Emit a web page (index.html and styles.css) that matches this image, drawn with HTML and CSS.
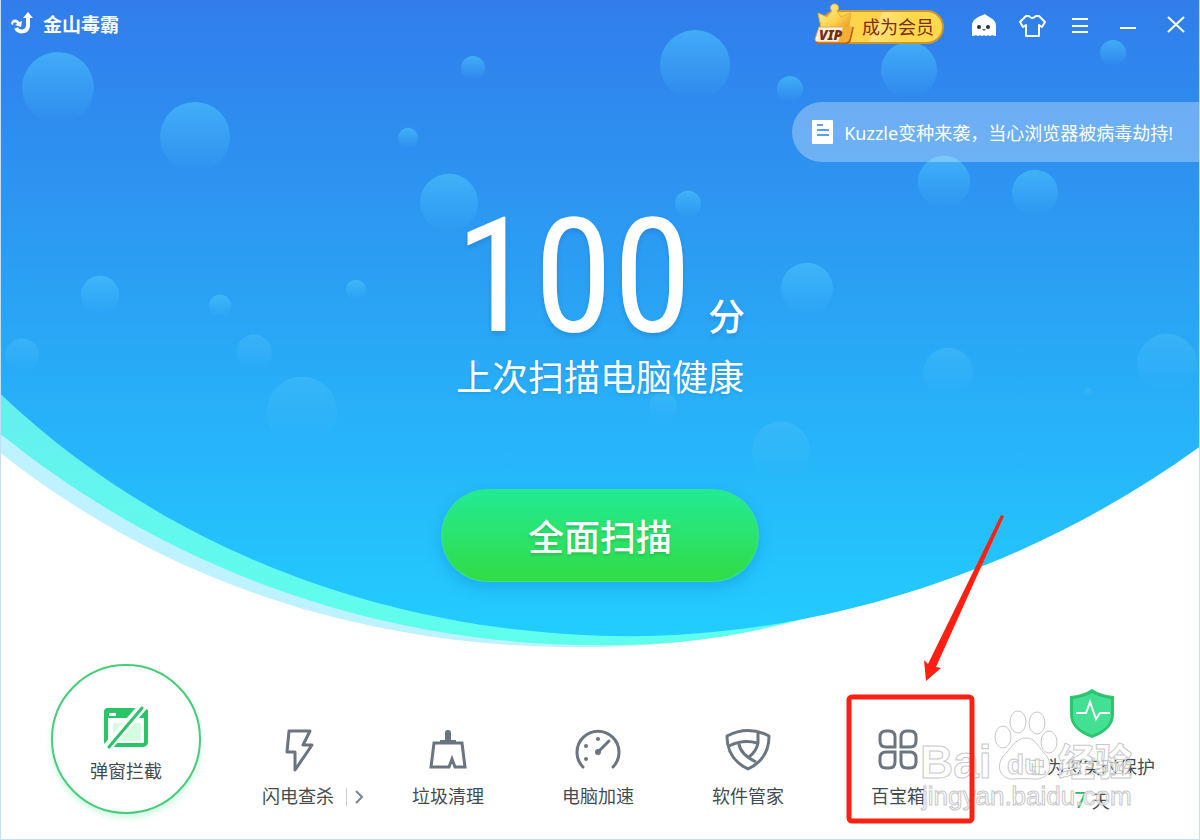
FILE: index.html
```html
<!DOCTYPE html>
<html lang="zh-CN">
<head>
    <meta charset="utf-8">
    <title>金山毒霸</title>
    <link rel="stylesheet" href="styles.css">
</head>
<body>
<div class="app">
    <svg class="backdrop" viewBox="0 0 1200 840" preserveAspectRatio="none" aria-hidden="true">
        <defs>
            <linearGradient id="sky" gradientUnits="userSpaceOnUse" x1="0" y1="0" x2="0" y2="640">
                <stop offset="0" stop-color="#317deb"/>
                <stop offset="1" stop-color="#22cdff"/>
            </linearGradient>
            <linearGradient id="wave" x1="0" y1="0" x2="0" y2="1">
                <stop offset="0" stop-color="#67e9ee"/>
                <stop offset="1" stop-color="#5fffed"/>
            </linearGradient>
            <linearGradient id="bubble" x1="0" y1="0" x2="0" y2="1">
                <stop offset="0" stop-color="#48bffb" stop-opacity=".7"/>
                <stop offset="1" stop-color="#48bffb" stop-opacity="0"/>
            </linearGradient>
        </defs>
        <path fill="#bdf2fe" d="M0 453C170 588 372 648 580 648C650 648 740 640 800 618L800 300L0 300z"/>
        <path fill="url(#wave)" d="M0 434C170 572 380 646 600 646C680 646 745 637 820 615L820 300L0 390z"/>
        <path fill="url(#sky)" d="M0 0H1200V447C1020 578 810 637 630 637C400 637 170 556 0 394z"/>
        <g fill="url(#bubble)">
            <circle cx="58" cy="88" r="36"/>
            <circle cx="195" cy="137" r="35"/>
            <circle cx="473" cy="68" r="12"/>
            <circle cx="408" cy="138" r="10"/>
            <circle cx="449" cy="203" r="29"/>
            <circle cx="695" cy="65" r="35"/>
            <circle cx="790" cy="89" r="13"/>
            <circle cx="909" cy="70" r="28"/>
            <circle cx="1113" cy="53" r="13"/>
            <circle cx="944" cy="182" r="26"/>
            <circle cx="1035" cy="193" r="23"/>
            <circle cx="688" cy="204" r="13"/>
            <circle cx="807" cy="289" r="26"/>
            <circle cx="100" cy="295" r="19"/>
            <circle cx="220" cy="306" r="11"/>
            <circle cx="356" cy="290" r="10"/>
        </g>
        <g fill="url(#bubble)" opacity=".7">
            <circle cx="22" cy="356" r="17"/>
            <circle cx="254" cy="353" r="18"/>
            <circle cx="302" cy="412" r="35"/>
            <circle cx="474" cy="366" r="6"/>
            <circle cx="663" cy="407" r="14"/>
            <circle cx="948" cy="373" r="25"/>
            <circle cx="1167" cy="364" r="30"/>
            <circle cx="1088" cy="393" r="4"/>
            <circle cx="781" cy="451" r="29"/>
        </g>
    </svg>

    <header class="titlebar">
        <div class="brand">
            <svg width="24" height="24" viewBox="0 0 24 24" aria-hidden="true">
                <path d="M1 12c0-5 6-6 8-2l3-1-1 6-6-2 2-1c-1-2-4-2-4 1z" fill="#fff"/>
                <path d="M6 16c2 5 12 5 12-3V6" fill="none" stroke="#fff" stroke-width="4"/>
                <path d="M18 0l5 6H13z" fill="#fff"/>
            </svg>
            <span>金山毒霸</span>
        </div>
        <div class="tools">
            <button class="vip">
                <svg class="crown" width="42" height="44" viewBox="0 0 42 44" aria-hidden="true">
                    <defs>
                        <linearGradient id="gold" x1="0" y1="0" x2="1" y2="1">
                            <stop offset="0" stop-color="#fff2a6"/>
                            <stop offset=".55" stop-color="#ffd34d"/>
                            <stop offset="1" stop-color="#e38b18"/>
                        </linearGradient>
                    </defs>
                    <path d="M4 11l9 4 5-6a4 4 0 1 1 5 0l4 6 10-4-3 19H8z" fill="url(#gold)" stroke="#e8b040"/>
                    <path d="M6 25h34l-3 13q-1 4-4 4H5q-4 0-4-4z" fill="#b66714"/>
                    <path d="M5 25h33l-3 12q-1 3-4 3H4q-3 0-3-3z" fill="#fff3df" stroke="#e2a558"/>
                    <path d="M29 25h9l-3 12q-1 3-4 3h-7z" fill="#f5ad32"/>
                    <text x="5" y="38" class="vip-mark">VIP</text>
                </svg>
                <span>成为会员</span>
            </button>
            <button class="tool" aria-label="助手">
                <svg width="28" height="28" viewBox="0 0 28 28" aria-hidden="true">
                    <path d="M2 25V15C2 8 8 6 13 4l2-1c2 3 11 4 11 12v10q-3 0-4-1-2 2-4 0-2 2-4 0-2 2-4 0-2 2-4 0-1 1-4 1z" fill="#fff"/>
                    <circle cx="9" cy="16" r="2" fill="#233"/>
                    <circle cx="18" cy="16" r="2" fill="#233"/>
                    <path d="M12 18h4l-2 2z" fill="#566"/>
                </svg>
            </button>
            <button class="tool" aria-label="换肤">
                <svg width="28" height="28" viewBox="0 0 28 28" aria-hidden="true">
                    <path d="M8 5l-6 6 3 5 3-2v11h13V14l3 2 3-5-6-6h-3q-4 4-7 0z" fill="none" stroke="#fff" stroke-width="2" stroke-linejoin="round"/>
                </svg>
            </button>
            <button class="tool" aria-label="菜单">
                <svg width="28" height="28" viewBox="0 0 28 28" aria-hidden="true">
                    <path d="M6 8h16M6 15h16M6 21h16" stroke="#fff" stroke-width="2"/>
                </svg>
            </button>
            <button class="tool" aria-label="最小化">
                <svg width="28" height="28" viewBox="0 0 28 28" aria-hidden="true">
                    <path d="M6 17h16" stroke="#fff" stroke-width="2"/>
                </svg>
            </button>
            <button class="tool" aria-label="关闭">
                <svg width="28" height="28" viewBox="0 0 28 28" aria-hidden="true">
                    <path d="M6 6l16 15M22 6L6 21" stroke="#fff" stroke-width="2"/>
                </svg>
            </button>
        </div>
    </header>

    <a class="notice" href="#">
        <svg width="24" height="28" viewBox="0 0 24 28" aria-hidden="true">
            <rect x="1" y="2" width="21" height="24" rx="1" fill="#fff"/>
            <path d="M6 7h6M6 12h12M6 17h12" stroke="#5b9fec" stroke-width="2"/>
        </svg>
        <span>Kuzzle变种来袭，当心浏览器被病毒劫持!</span>
    </a>

    <main class="hero">
        <div class="score"><span class="number">100</span><span class="unit">分</span></div>
        <p class="status">上次扫描电脑健康</p>
        <button class="scan">全面扫描</button>
    </main>

    <footer class="dock">
        <button class="popup">
            <svg width="48" height="48" viewBox="0 0 48 48" aria-hidden="true">
                <rect x="4" y="6" width="40" height="35" rx="3" fill="#fff" stroke="#29c466" stroke-width="4"/>
                <path d="M2 14V8q0-4 4-4h36q4 0 4 4v6z" fill="#29c466"/>
                <path d="M11 19h28v18H11z" fill="#d5fde1"/>
                <path d="M7 9h7v3H7z" fill="#fff"/>
                <path d="M3 46L43 0" stroke="#fff" stroke-width="9"/>
                <path d="M7 43L40 4" stroke="#29c466" stroke-width="3" stroke-linecap="round"/>
            </svg>
            <span>弹窗拦截</span>
        </button>
        <nav class="features">
            <div class="feature-group">
                <button class="feature">
                    <svg width="48" height="48" viewBox="0 0 48 48" aria-hidden="true">
                        <path d="M15 5h21l-7 14h9L21 44V26h-8z" fill="none" stroke="#6b7580" stroke-width="3" stroke-linejoin="round"/>
                    </svg>
                    <span>闪电查杀</span>
                </button>
                <button class="more" aria-label="更多查杀方式">
                    <svg width="10" height="18" viewBox="0 0 10 18" aria-hidden="true">
                        <path d="M1 3l6 6-6 6" fill="none" stroke="#7b858e" stroke-width="2"/>
                    </svg>
                </button>
            </div>
            <button class="feature">
                <svg width="48" height="48" viewBox="0 0 48 48" aria-hidden="true">
                    <path d="M21 14V7q0-3 3-3t3 3v7h5v4H16v-4z" fill="#6b7580"/>
                    <path d="M10 17h28l3 24H31l-3-8-3 8H7z" fill="none" stroke="#6b7580" stroke-width="3"/>
                </svg>
                <span>垃圾清理</span>
            </button>
            <button class="feature">
                <svg width="48" height="48" viewBox="0 0 48 48" aria-hidden="true">
                    <path d="M9 41a21 21 0 1 1 30 0" fill="none" stroke="#6b7580" stroke-width="3" stroke-linecap="round"/>
                    <path d="M24 26l11-11" stroke="#6b7580" stroke-width="3" stroke-linecap="round"/>
                    <circle cx="24" cy="26" r="3" fill="#6b7580"/>
                    <g fill="#6b7580"><circle cx="12" cy="33" r="2"/><circle cx="12" cy="20" r="2"/><circle cx="24" cy="13" r="2"/></g>
                </svg>
                <span>电脑加速</span>
            </button>
            <button class="feature">
                <svg width="48" height="48" viewBox="0 0 48 48" aria-hidden="true">
                    <g fill="none" stroke="#6b7580" stroke-width="3" stroke-linejoin="round">
                        <path d="M3 10q21-11 42 0 0 23-21 33Q3 33 3 10z"/>
                        <path d="M5 20q14-7 28-3M34 6v11c-1 6-4 10-9 14M15 18c1 8 7 13 17 18"/>
                    </g>
                </svg>
                <span>软件管家</span>
            </button>
            <button class="feature">
                <svg width="48" height="48" viewBox="0 0 48 48" aria-hidden="true">
                    <g fill="none" stroke="#6b7580" stroke-width="3">
                        <path d="M21 21h-9q-6 0-6-6v-4q0-6 6-6h3q6 0 6 6z"/>
                        <path d="M27 21h9q6 0 6-6v-4q0-6-6-6h-3q-6 0-6 6z"/>
                        <path d="M21 26h-9q-6 0-6 6v4q0 6 6 6h3q6 0 6-6z"/>
                        <path d="M27 26h9q6 0 6 6v4q0 6-6 6h-3q-6 0-6-6z"/>
                    </g>
                </svg>
                <span>百宝箱</span>
            </button>
        </nav>
        <div class="guard">
            <svg width="48" height="54" viewBox="0 0 48 54" aria-hidden="true">
                <path d="M24 2q9 6 22 7v18q0 16-22 24Q2 43 2 27V9q13-1 22-7z" fill="#2cc46e"/>
                <path d="M24 6q9 5 19 6v16q0 13-19 20Q5 41 5 28V12q10-1 19-6z" fill="#43df92"/>
                <path d="M8 26h10l4-11 6 17 4-6h10" fill="none" stroke="#fff" stroke-width="2"/>
            </svg>
            <p>已为您实时保护</p>
            <p><b>7</b> 天</p>
        </div>
    </footer>

    <div class="watermark">
        <svg viewBox="0 0 220 120" width="220" height="120" aria-hidden="true">
            <g fill="#fff" stroke="#c8c8c8" fill-opacity=".7">
                <ellipse cx="83" cy="36" rx="8" ry="11"/>
                <ellipse cx="98" cy="21" rx="8" ry="11"/>
                <ellipse cx="117" cy="22" rx="8" ry="11"/>
                <ellipse cx="129" cy="41" rx="8" ry="11"/>
                <path d="M106 37c9 0 12 8 18 15 10 9 7 26-8 26-7 0-15-1-22 0-16 1-19-16-8-26 7-7 10-15 20-15z"/>
            </g>
            <g class="mark">
                <text x="0" y="77" class="mark-big">Bai</text>
                <text x="87" y="73" class="mark-du">du</text>
                <text x="138" y="75" class="mark-cjk">经验</text>
                <text x="2" y="104" class="mark-url">jingyan.baidu.com</text>
            </g>
        </svg>
    </div>

    <!-- pointer to the toolbox entry -->
    <svg class="pointer" viewBox="0 0 160 312" width="160" height="312" aria-hidden="true">
        <path d="M156 3l3 1-68 151 5 1-15 13-2-21 4 4z" fill="#ff2012"/>
        <rect x="4" y="185" width="123" height="124" rx="3" fill="none" stroke="#ff2012" stroke-width="5"/>
    </svg>
</div>
</body>
</html>
```
FILE: styles.css
```css
* {
    box-sizing: border-box;
}

body {
    margin: 0;
    font-family: "Noto Sans", "Noto Sans CJK SC", sans-serif;
    font-size: 18px;
    color: #444b50;
    background: #fff;
}

button {
    padding: 0;
    border: none;
    background: transparent;
    font: inherit;
    color: inherit;
    cursor: pointer;
}

p {
    margin: 0;
}

svg {
    display: block;
}

.app {
    position: relative;
    display: flex;
    flex-direction: column;
    min-height: 100vh;
    overflow: hidden;
    border: 1px solid #c4def3;
    border-top: none;
    isolation: isolate;
}

/* blue hill with bubbles behind everything */
.backdrop {
    position: absolute;
    top: 0;
    left: -1px;
    width: 100vw;
    height: 100%;
    z-index: -1;
}

.titlebar {
    display: flex;
    justify-content: space-between;
    padding: 0 9px;
    height: 102px;
}

.brand {
    display: flex;
    gap: 9px;
    padding-top: 11px;
    height: 36px;
    align-items: center;
    color: #fff;
    font-size: 19px;
    font-weight: 700;
}

.tools {
    display: flex;
    gap: 20px;
    align-items: flex-start;
    padding-top: 10px;
}

.tool {
    width: 28px;
    height: 30px;
}

.vip {
    position: relative;
    width: 124px;
    height: 34px;
    margin-right: 6px;
    padding-left: 32px;
    border: 2px solid #c99633;
    border-radius: 17px;
    background: linear-gradient(115deg, #ffd34a 45%, #ffe27a 46%, #ffd84b 70%);
    color: #7b2c0d;
    line-height: 30px;
}

.crown {
    position: absolute;
    left: -8px;
    top: -10px;
}

.vip-mark {
    font: italic 900 14px "Noto Sans", sans-serif;
    fill: #70300e;
}

.notice {
    display: flex;
    align-items: center;
    align-self: flex-end;
    gap: 9px;
    height: 60px;
    padding: 0 26px 0 19px;
    border-radius: 30px 0 0 30px;
    background: rgba(255, 255, 255, .3);
    color: #fff;
    text-decoration: none;
}

.hero {
    display: flex;
    flex-direction: column;
    align-items: center;
    color: #fff;
}

.score {
    display: flex;
    align-items: baseline;
    gap: 16px;
    margin-top: 55px;
    line-height: 120px;
    text-shadow: 0 3px 4px rgba(20, 100, 190, .3);
}

.number {
    font-family: "Roboto Condensed", Roboto, sans-serif;
    font-size: 160px;
}

.unit {
    font-size: 37px;
    font-weight: 500;
    line-height: 36px;
}

.status {
    margin-top: 13px;
    font-size: 36px;
    line-height: 56px;
    text-shadow: 0 1px 3px rgba(20, 100, 190, .3);
}

.scan {
    width: 318px;
    height: 93px;
    margin-top: 83px;
    border: 1px solid #33e58c;
    border-radius: 47px;
    background: linear-gradient(#22eb94, #31dc45);
    box-shadow: 0 6px 14px rgba(20, 120, 200, .3);
    font-size: 36px;
    font-weight: 500;
    text-shadow: 0 2px 3px rgba(20, 120, 50, .3);
}

.dock {
    display: flex;
    align-items: flex-start;
    margin-top: auto;
    padding: 0 44px 22px 50px;
}

.popup {
    display: flex;
    flex-direction: column;
    align-items: center;
    gap: 5px;
    width: 150px;
    height: 150px;
    padding-top: 38px;
    border: 2px solid #45cd78;
    border-radius: 50%;
    background: #fff;
    box-shadow: 0 4px 6px #d2f8e4;
    line-height: 28px;
}

.features {
    display: flex;
    gap: 78px;
    margin-left: 61px;
    padding-top: 62px;
}

.feature-group {
    display: flex;
    align-items: flex-end;
    width: 72px;
}

.feature {
    display: flex;
    flex-direction: column;
    flex-shrink: 0;
    align-items: center;
    gap: 8px;
    width: 72px;
    line-height: 28px;
}

.more {
    margin: 0 0 4px 12px;
    padding-left: 8px;
    border-left: 1px solid #c8cdd1;
}

.guard {
    margin-left: auto;
    padding-top: 23px;
    line-height: 32px;
    text-align: center;
}

.guard svg {
    margin: 0 auto 10px;
}

.guard b {
    color: #23bf65;
    font-size: 22px;
    font-weight: 400;
}

.watermark {
    position: absolute;
    right: 59px;
    bottom: 18px;
    pointer-events: none;
}

.mark {
    fill: #fff;
    fill-opacity: .7;
    stroke: #c8c8c8;
    stroke-width: 1px;
}

.mark-big {
    font: 700 46px "Liberation Sans", sans-serif;
}

.mark-du {
    font: 700 28px "Liberation Sans", sans-serif;
}

.mark-cjk {
    font: 900 37px "Noto Sans CJK SC", sans-serif;
}

.mark-url {
    font: 26px "Liberation Sans", sans-serif;
}

.pointer {
    position: absolute;
    right: 194px;
    bottom: 15px;
    pointer-events: none;
}
```
